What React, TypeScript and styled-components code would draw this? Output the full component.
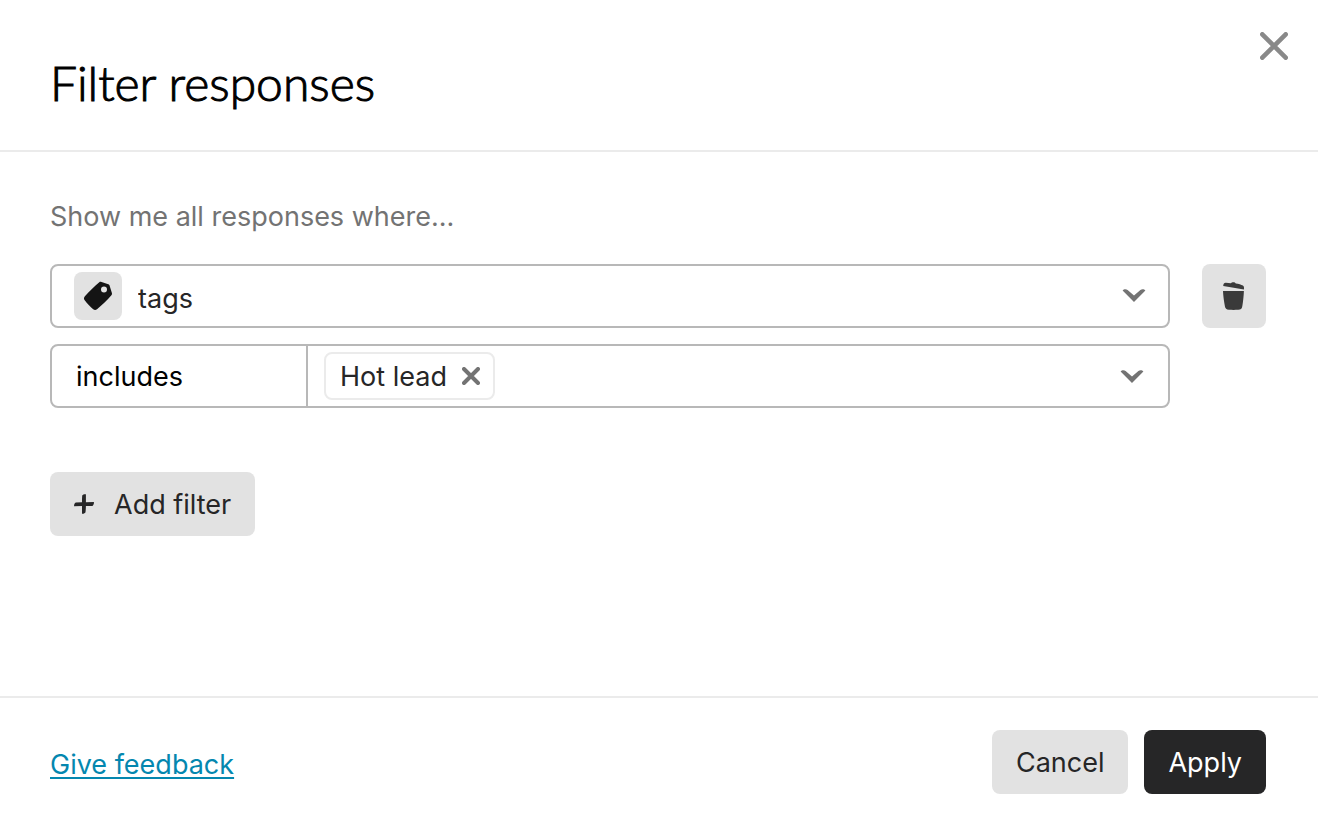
import React from "react";
import styled, { createGlobalStyle } from "styled-components";

const GlobalStyle = createGlobalStyle`
  *, *::before, *::after { box-sizing: border-box; }
  body {
    margin: 0;
    background: #fff;
    color: #262627;
    font-family: Inter, "Liberation Sans", sans-serif;
    font-size: 27px;
    line-height: 40px;
  }
  button, input, select { font: inherit; color: inherit; }
`;

const Dialog = styled.main`
  display: flex;
  flex-direction: column;
  min-height: 100vh;
`;

const Header = styled.header`
  display: flex;
  justify-content: space-between;
  align-items: flex-start;
  padding: 24px 18px 36px 50px;
  border-bottom: 2px solid #ebebeb;
`;

const Title = styled.h1`
  margin: 28px 0 0;
  color: #000;
  font-family: Lato, sans-serif;
  font-size: 48px;
  font-weight: 300;
  line-height: 62px;
  -webkit-text-stroke: 1px #000;
`;

const IconButton = styled.button`
  display: flex;
  padding: 0;
  border: 0;
  background: none;
  color: #737373;
  cursor: pointer;
`;

const CloseButton = styled(IconButton)`
  padding: 8px 12px;
  color: #898989;
`;

const Body = styled.form`
  flex: 1;
  padding: 45px 52px 64px 50px;
`;

const Lead = styled.p`
  margin: 0 0 27px;
  color: #737373;
`;

const FilterRow = styled.div`
  display: flex;
  align-items: flex-start;
  gap: 32px;
  margin-bottom: 64px;
`;

const Fields = styled.div`
  flex: 1;
  display: grid;
  gap: 16px;
`;

const Field = styled.div`
  display: flex;
  align-items: stretch;
  height: 64px;
  border: 2px solid #b8b8b8;
  border-radius: 8px;
`;

const SelectBox = styled.div`
  flex: 1;
  display: grid;
  align-items: center;
  > * { grid-area: 1 / 1; }
`;

const Select = styled.select<{ $inset: number; $drop?: number }>`
  width: 100%;
  height: 60px;
  padding: ${(p) => p.$drop ?? 2}px 24px 0 ${(p) => p.$inset}px;
  border: 0;
  background: none;
  appearance: none;
`;

const TagBadge = styled.span`
  display: flex;
  align-items: center;
  justify-content: center;
  width: 48px;
  height: 48px;
  margin-left: 22px;
  border-radius: 8px;
  background: #e2e2e2;
  pointer-events: none;
`;

const SelectArrow = styled.span`
  display: flex;
  justify-self: end;
  margin-right: 22px;
  color: #737373;
  pointer-events: none;
`;

const Operator = styled.div`
  width: 256px;
  border-right: 2px solid #b8b8b8;
  color: #000;
`;

const Values = styled.div`
  flex: 1;
  display: flex;
  align-items: center;
  padding: 0 24px 0 16px;
`;

const Chip = styled.span`
  display: flex;
  align-items: center;
  gap: 15px;
  height: 48px;
  padding: 0 13px 0 14px;
  border: 2px solid #ebebeb;
  border-radius: 8px;
  white-space: nowrap;
`;

const Label = styled.span`
  padding-top: 2px;
`;

const ValueInput = styled.input`
  flex: 1;
  min-width: 0;
  border: 0;
  background: none;
  outline: 0;
`;

const OpenButton = styled(IconButton)`
  padding-top: 2px;
`;

const Button = styled.button<{ $dark?: boolean }>`
  display: flex;
  align-items: center;
  justify-content: center;
  gap: 20px;
  height: 64px;
  min-width: 64px;
  padding: 0 24px;
  border: 0;
  border-radius: 8px;
  background: ${(p) => (p.$dark ? "#262627" : "#e2e2e2")};
  color: ${(p) => (p.$dark ? "#fff" : "#262627")};
  cursor: pointer;
`;

const SquareButton = styled(Button)`
  width: 64px;
  padding: 0;
`;

const Footer = styled.footer`
  display: flex;
  justify-content: space-between;
  align-items: center;
  padding: 32px 52px 22px 50px;
  border-top: 2px solid #ebebeb;
`;

const Actions = styled.div`
  display: flex;
  gap: 16px;
`;

const FeedbackLink = styled.a`
  padding-top: 6px;
  color: #0487af;
  text-decoration-thickness: 2px;
  text-underline-offset: 3px;
  text-decoration-skip-ink: none;
`;

const Cross = ({ size, weight }: { size: number; weight: number }) => {
  const a = weight / 2;
  const b = size - a;
  return (
    <svg width={size} height={size} viewBox={`0 0 ${size} ${size}`} aria-hidden="true">
      <path d={`M${a} ${a}L${b} ${b}M${b} ${a}L${a} ${b}`} stroke="currentColor" strokeWidth={weight} strokeLinecap="round" />
    </svg>
  );
};

const Chevron = () => (
  <svg width="24" height="14" viewBox="0 0 24 14" aria-hidden="true">
    <path d="M.6 1.600C1.700 0 4-.2 5.600.9L12 6.500 18.400.9C20-.2 22.300 0 23.400 1.600L12 13Z" fill="currentColor" />
  </svg>
);

const TagIcon = () => (
  <svg width="30" height="30" viewBox="0 0 30 30" aria-hidden="true">
    <path fillRule="evenodd" fill="#141414" d="M16.300 1.200C17 .7 17.700.8 18.500 1.100L25.300 3.200C26.200 3.500 26.500 4 26.700 4.900L28.900 12C29.100 13 29 13.700 28.400 14.300 24 19.300 19.300 23.800 14.300 28 12.800 29.200 11.500 29.300 10.200 28.200 7.200 25.600 4.200 22.500 1.700 19.200.6 17.700.8 16.500 1.900 15.200 6.500 10.200 11.200 5.400 16.300 1.200ZM21 5.500A3 3 0 1 0 21 11.500A3 3 0 1 0 21 5.500Z" />
  </svg>
);

const TrashIcon = () => (
  <svg width="22" height="28" viewBox="0 0 22 28" aria-hidden="true">
    <path fill="#3a3a3a" d="M.2 3.900C.4 1.800 1.200.7 2.800.8L8 1.300C8.900-.3 12-.1 12.800 1.500 15.500 1.900 18.300 2.600 19.900 3.600 21 4.300 21.200 5.600 20.900 7.400 14.300 6.200 7.200 5.100.2 3.900ZM0 9H20.900C20.700 13.700 20.200 19.300 19.300 24.200 18.800 26.800 17.800 27.700 15.200 27.800 12.100 28 8.900 28 5.800 27.800 3.400 27.700 2.300 26.700 1.900 24.300 1 19.300.2 14 0 9Z" />
  </svg>
);

const PlusIcon = () => (
  <svg width="20" height="20" viewBox="0 0 20 20" aria-hidden="true">
    <path fill="currentColor" d="M8.200 1.600C9 .5 10.300.1 11.900.3V8.200L19.900 8C20.100 9.700 19.500 11 18.300 11.900L11.900 12C11.900 14.200 11.700 16.400 11.500 18.300 10.700 19.500 9.500 20 8 19.700V12L.1 12.200C-.1 10.500.6 9.200 1.800 8.400L8 8.200C8 6 8 3.800 8.200 1.600Z" />
  </svg>
);

export default function App() {
  return (
    <>
      <GlobalStyle />
      <Dialog role="dialog" aria-labelledby="dialog-title">
        <Header>
          <Title id="dialog-title">Filter responses</Title>
          <CloseButton type="button" aria-label="Close">
            <Cross size={28} weight={4.6} />
          </CloseButton>
        </Header>
        <Body id="filters">
          <Lead>Show me all responses where...</Lead>
          <FilterRow>
            <Fields>
              <Field>
                <SelectBox>
                  <TagBadge><TagIcon /></TagBadge>
                  <Select $inset={86} $drop={6} aria-label="Filter by">
                    <option>tags</option>
                  </Select>
                  <SelectArrow><Chevron /></SelectArrow>
                </SelectBox>
              </Field>
              <Field>
                <Operator>
                  <Select $inset={24} aria-label="Condition">
                    <option>includes</option>
                  </Select>
                </Operator>
                <Values>
                  <Chip>
                    <Label>Hot lead</Label>
                    <IconButton type="button" aria-label="Remove Hot lead">
                      <Cross size={18} weight={4} />
                    </IconButton>
                  </Chip>
                  <ValueInput aria-label="Tag values" />
                  <OpenButton type="button" aria-label="Show tags">
                    <Chevron />
                  </OpenButton>
                </Values>
              </Field>
            </Fields>
            <SquareButton type="button" aria-label="Delete filter">
              <TrashIcon />
            </SquareButton>
          </FilterRow>
          <Button type="button">
            <PlusIcon />
            <Label>Add filter</Label>
          </Button>
        </Body>
        <Footer>
          <FeedbackLink href="#feedback">Give feedback</FeedbackLink>
          <Actions>
            <Button type="button"><Label>Cancel</Label></Button>
            <Button type="submit" form="filters" $dark><Label>Apply</Label></Button>
          </Actions>
        </Footer>
      </Dialog>
    </>
  );
}
